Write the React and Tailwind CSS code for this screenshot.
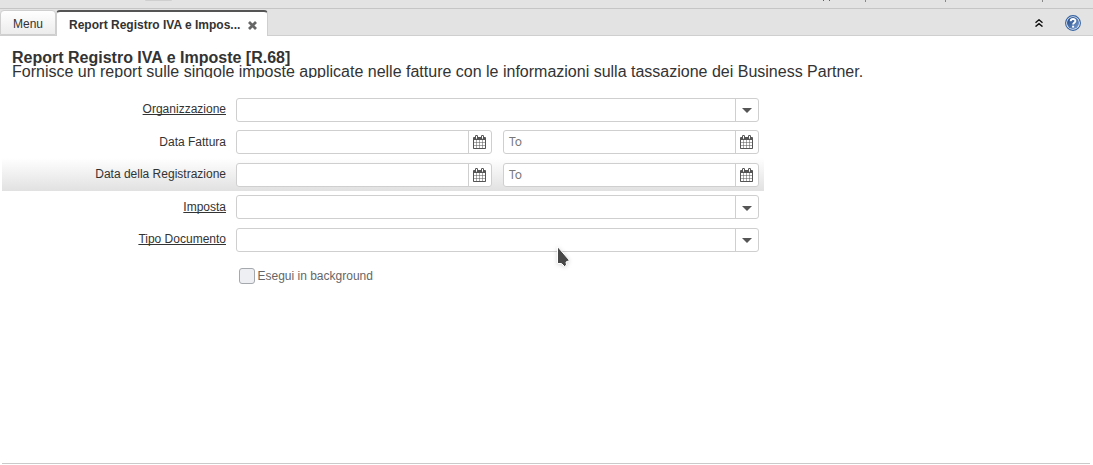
import React from 'react';

function CalendarIcon() {
  return (
    <svg viewBox="0 0 1664 1792" className="mr-[2px] block h-[14px] w-[13px] shrink-0" fill="#555">
      <path d="M128 1664h288v-288h-288v288zm352 0h320v-288h-320v288zm-352-352h288v-320h-288v320zm352 0h320v-320h-320v320zm-352-384h288v-288h-288v288zm736 736h320v-288h-320v288zm-384-736h320v-288h-320v288zm768 736h288v-288h-288v288zm-384-352h320v-320h-320v320zm-352-864v-288q0-13-9.5-22.5t-22.5-9.5h-64q-13 0-22.5 9.5t-9.5 22.5v288q0 13 9.5 22.5t22.5 9.5h64q13 0 22.5-9.5t9.5-22.5zm736 864h288v-320h-288v320zm-384-384h320v-288h-320v288zm384 0h288v-288h-288v288zm32-480v-288q0-13-9.5-22.5t-22.5-9.5h-64q-13 0-22.5 9.5t-9.5 22.5v288q0 13 9.5 22.5t22.5 9.5h64q13 0 22.5-9.5t9.5-22.5zm384-64v1280q0 52-38 90t-90 38h-1408q-52 0-90-38t-38-90v-1280q0-52 38-90t90-38h128v-96q0-66 47-113t113-47h64q66 0 113 47t47 113v96h384v-96q0-66 47-113t113-47h64q66 0 113 47t47 113v96h128q52 0 90 38t38 90z" />
    </svg>
  );
}

function CaretIcon({ className }) {
  return (
    <svg viewBox="0 0 10 5" className={`block h-[5px] w-[10px] shrink-0 ${className}`} fill="#555">
      <path d="M0 0h10L5 5z" />
    </svg>
  );
}

function HelpIcon() {
  return (
    <svg viewBox="0 0 16 16" className="block size-4">
      <defs>
        <linearGradient id="help" x1="0" y1="0" x2="1" y2="1">
          <stop offset="0" stopColor="#173f7d" />
          <stop offset="1" stopColor="#7ea2d4" />
        </linearGradient>
      </defs>
      <circle cx="8" cy="8" r="7.4" fill="#e9eff8" stroke="#3461a0" strokeWidth="1.1" />
      <circle cx="8" cy="8" r="6" fill="url(#help)" />
      <path d="M5.7 6.2C5.7 3.3 10.4 3.3 10.4 6c0 1.7-2.3 1.8-2.3 3.6" fill="none" stroke="#fff" strokeWidth="1.9" />
      <rect x="7.1" y="10.7" width="2" height="1.9" fill="#fff" />
    </svg>
  );
}

function Field({ className, placeholder, children }) {
  return (
    <div className={`flex h-6 overflow-hidden rounded-[3px] border border-[#cfcfcf] bg-white ${className}`}>
      <div className="flex grow items-center pl-[5px] font-['Noto_Sans',sans-serif] text-[12px] leading-none text-[#777]">
        {placeholder}
      </div>
      <div className="flex w-[23px] items-center justify-center border-l border-[#cfcfcf]">{children}</div>
    </div>
  );
}

function Label({ children, underlined }) {
  return (
    <div className="w-[224px] shrink-0 text-right text-[12px] leading-[14px] text-[#333]">
      <span className={underlined ? 'underline decoration-1 [text-decoration-skip-ink:none]' : ''}>{children}</span>
    </div>
  );
}

function ComboRow({ label, className = '', labelClassName = 'pt-1', caretClassName = '' }) {
  return (
    <div className={`flex h-6 gap-[10px] ${className}`}>
      <div className={labelClassName}>
        <Label underlined>{label}</Label>
      </div>
      <Field className="w-[523px]">
        <CaretIcon className={caretClassName} />
      </Field>
    </div>
  );
}

function DateFields() {
  return (
    <div className="flex gap-[11px]">
      <Field className="w-[256px]">
        <CalendarIcon />
      </Field>
      <Field className="w-[256px]" placeholder="To">
        <CalendarIcon />
      </Field>
    </div>
  );
}

export default function App() {
  return (
    <div className="relative flex h-[465px] w-[1093px] flex-col overflow-hidden bg-white font-['Liberation_Sans',Arial,sans-serif] text-[#333]">
      <div className="flex h-[9px] shrink-0 items-start border-b border-[#c5c5c5] bg-[#e3e3e3]">
        <div className="ml-[145px] h-px w-[27px] rounded-b bg-[#cfcfcf]" />
        <div className="ml-[651px] h-px w-px bg-[#3b7a3b]" />
        <div className="ml-[5px] h-px w-px bg-[#3b7a3b]" />
        <div className="ml-[35px] h-[2px] w-px bg-[#888]" />
        <div className="ml-[79px] h-[2px] w-px bg-[#888]" />
        <div className="ml-[96px] h-[2px] w-px bg-[#888]" />
      </div>

      <div className="flex h-[27px] shrink-0 border-b border-[#cfcfcf] bg-[#e3e3e3] pt-px">
        <div className="flex h-[25px] w-[56px] items-center justify-center rounded-t-[4px] border border-[#cfcfcf] bg-linear-to-b from-white to-[#ececec] pt-[2px] text-[12px]">
          Menu
        </div>
        <div className="flex h-[26px] w-[212px] items-center rounded-t-[4px] border-x border-t-2 border-x-[#cfcfcf] border-t-[#555] bg-white pl-3 pt-[2px] text-[12px] font-bold">
          <span className="whitespace-nowrap">Report Registro IVA e Impos...</span>
          <svg viewBox="0 0 9 9" className="ml-2 block size-[9px]" stroke="#666" strokeWidth="2.8">
            <path d="M1 1l7 7M8 1L1 8" />
          </svg>
        </div>
        <div className="flex grow items-center justify-end gap-[22px] pr-3">
          <svg viewBox="0 0 8 8" className="block size-2" fill="none" stroke="#111" strokeWidth="1.4">
            <path d="M.5 3.7L4 .8l3.5 2.9M.5 7.6L4 4.7l3.5 2.9" />
          </svg>
          <HelpIcon />
        </div>
      </div>

      <div className="h-[42px] shrink-0 overflow-hidden pl-3 pt-[15px] text-[16px] leading-[14px] whitespace-nowrap">
        <div className="font-bold">Report Registro IVA e Imposte [R.68]</div>
        <div>
          Fornisce un report sulle singole imposte applicate nelle fatture con le informazioni sulla tassazione dei
          Business Partner.
        </div>
      </div>

      <div className="ml-[2px] mt-5 flex w-[762px] flex-col">
        <ComboRow label="Organizzazione" />
        <div className="mt-2 flex h-6 gap-[10px]">
          <div className="pt-[5px]">
            <Label>Data Fattura</Label>
          </div>
          <DateFields />
        </div>
        <div className="mt-1 flex h-[33px] gap-[10px] bg-linear-to-b from-white to-[#e1e1e1] pt-[5px]">
          <div className="pt-1">
            <Label>Data della Registrazione</Label>
          </div>
          <DateFields />
        </div>
        <ComboRow label="Imposta" className="mt-1" labelClassName="pt-[5px]" caretClassName="mt-[2px]" />
        <ComboRow label="Tipo Documento" className="mt-[9px]" />
        <div className="ml-[237px] mt-[15px] flex items-center gap-[2.5px] text-[12px] text-[#666]">
          <div className="size-4 rounded-[3px] border border-[#a5a8ad] bg-[#edeff2]" />
          <span className="pt-px leading-4">Esegui in background</span>
        </div>
      </div>

      <div className="mx-[2px] mb-px mr-[3px] mt-auto h-px shrink-0 bg-[#cacaca]" />

      <svg viewBox="0 0 16 24" className="absolute left-[555px] top-[245px] h-6 w-4 drop-shadow-sm">
        <path d="M2.5 1.5v17h4l3 3 2-1.5-.5-3 3.5-1.5z" fill="#484848" stroke="#fff" strokeWidth="1" />
      </svg>
    </div>
  );
}
